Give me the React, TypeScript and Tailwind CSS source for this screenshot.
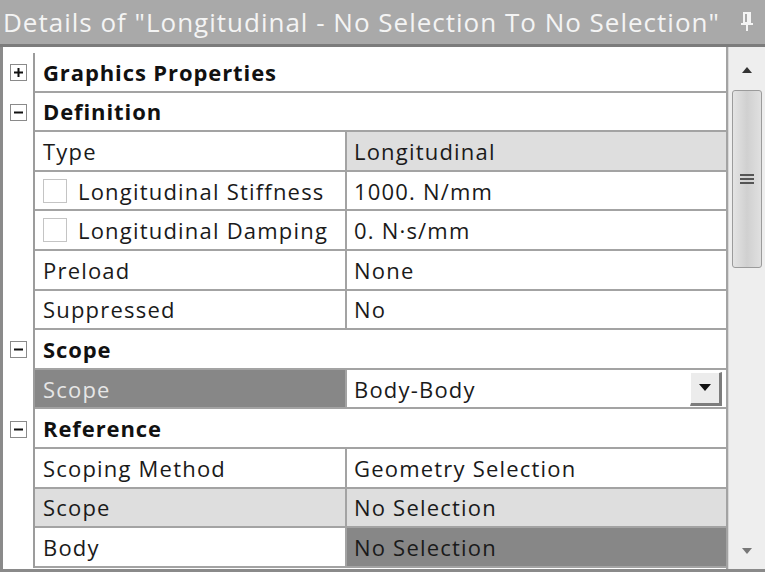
import React from 'react';

type Row =
  | { kind: 'group'; label: string; open: boolean }
  | {
      kind: 'prop';
      label: string;
      value: string;
      check?: boolean;
      labelTone?: 'light' | 'dark';
      valueTone?: 'light' | 'dark';
      dropdown?: boolean;
    };

const rows: Row[] = [
  { kind: 'group', label: 'Graphics Properties', open: false },
  { kind: 'group', label: 'Definition', open: true },
  { kind: 'prop', label: 'Type', value: 'Longitudinal', valueTone: 'light' },
  { kind: 'prop', label: 'Longitudinal Stiffness', value: '1000. N/mm', check: true },
  { kind: 'prop', label: 'Longitudinal Damping', value: '0. N·s/mm', check: true },
  { kind: 'prop', label: 'Preload', value: 'None' },
  { kind: 'prop', label: 'Suppressed', value: 'No' },
  { kind: 'group', label: 'Scope', open: true },
  { kind: 'prop', label: 'Scope', value: 'Body-Body', labelTone: 'dark', dropdown: true },
  { kind: 'group', label: 'Reference', open: true },
  { kind: 'prop', label: 'Scoping Method', value: 'Geometry Selection' },
  { kind: 'prop', label: 'Scope', value: 'No Selection', labelTone: 'light', valueTone: 'light' },
  { kind: 'prop', label: 'Body', value: 'No Selection', valueTone: 'dark' },
];

const toneBg = (tone?: 'light' | 'dark') =>
  tone === 'light' ? 'bg-[#dedede]' : tone === 'dark' ? 'bg-[#878787]' : 'bg-white';

function ExpandBox({ open }: { open: boolean }) {
  return (
    <div className="w-[17px] h-[17px] border border-[#8a8a8a] bg-white flex items-center justify-center">
      <svg width="11" height="11" viewBox="0 0 11 11">
        <rect x="1" y="4.5" width="9" height="2" fill="#111" />
        {!open && <rect x="4.5" y="1" width="2" height="9" fill="#111" />}
      </svg>
    </div>
  );
}

function PropRow({ row }: { row: Row }) {
  if (row.kind === 'group') {
    return (
      <div className="flex h-[39.6px]">
        <div className="w-[32px] shrink-0 flex items-center justify-center border-r-2 border-[#9c9c9c]">
          <ExpandBox open={row.open} />
        </div>
        <div className="flex-1 flex items-center pl-[8px] font-bold tracking-[0.9px] text-[#111] border-b-2 border-[#a3a3a3] bg-white">
          {row.label}
        </div>
      </div>
    );
  }
  return (
    <div className="flex h-[39.6px]">
      <div className="w-[32px] shrink-0 border-r-2 border-[#9c9c9c]" />
      <div
        className={`w-[312px] shrink-0 flex items-center pl-[8px] border-b-2 border-r-2 border-[#a3a3a3] ${toneBg(row.labelTone)} ${
          row.labelTone === 'dark' ? 'text-[#e6e6e6]' : 'text-[#1a1a1a]'
        }`}
      >
        {row.check && (
          <span className="w-[24px] h-[24px] border border-[#c4c4c4] bg-white mr-[11px] shrink-0" />
        )}
        {row.label}
      </div>
      <div
        className={`flex-1 flex items-center pl-[7px] border-b-2 border-[#a3a3a3] text-[#1a1a1a] ${toneBg(row.valueTone)}`}
      >
        <span className="flex-1">{row.value}</span>
        {row.dropdown && (
          <div className="w-[32px] h-[34px] mr-[4px] bg-[#ececec] border-r-[3px] border-b-[3px] border-[#7d7d7d] border-t border-l border-t-white border-l-white flex items-center justify-center">
            <svg width="14" height="8" viewBox="0 0 14 8">
              <polygon points="1,0 13,0 7,7" fill="#111" />
            </svg>
          </div>
        )}
      </div>
    </div>
  );
}

function Scrollbar() {
  return (
    <div className="w-[37px] shrink-0 bg-[#eeeeee] flex flex-col items-center border-l border-[#d8d8d8]">
      <div className="h-[43px] pt-[3px] flex items-center justify-center">
        <svg width="12" height="8" viewBox="0 0 12 8">
          <polygon points="6,1 11,7 1,7" fill="#333" />
        </svg>
      </div>
      <div className="w-[30px] h-[178px] rounded-[3px] border border-[#9b9b9b] bg-gradient-to-r from-[#e4e4e4] via-[#d0d0d0] to-[#e0e0e0] flex flex-col items-center justify-center gap-[2px]">
        <div className="w-[14px] h-[2px] bg-[#555]" />
        <div className="w-[14px] h-[2px] bg-[#555]" />
        <div className="w-[14px] h-[2px] bg-[#555]" />
      </div>
      <div className="flex-1" />
      <div className="h-[36px] flex items-center justify-center">
        <svg width="12" height="8" viewBox="0 0 12 8">
          <polygon points="1,1 11,1 6,7" fill="#777" />
        </svg>
      </div>
    </div>
  );
}

export default function App() {
  return (
    <div
      className="w-[765px] h-[572px] overflow-hidden bg-[#a9a9a9] flex flex-col text-[22px] tracking-[1.2px] leading-none"
      style={{ fontFamily: '"Open Sans", "Noto Sans", sans-serif' }}
    >
      <div className="h-[47px] shrink-0 flex items-center justify-between pl-[3px] pr-[12px] text-[#f4f4f4] text-[26px] tracking-[1px] border-b-[3px] border-[#7c7c7c]">
        <span>Details of "Longitudinal - No Selection To No Selection"</span>
        <svg width="12" height="20" viewBox="0 0 12 20">
          <rect x="3" y="1" width="6" height="10" fill="none" stroke="#f4f4f4" strokeWidth="2" />
          <rect x="6" y="2" width="2" height="9" fill="#f4f4f4" />
          <rect x="0" y="11" width="12" height="2" fill="#f4f4f4" />
          <rect x="5" y="13" width="2" height="6" fill="#f4f4f4" />
        </svg>
      </div>
      <div className="flex-1 flex border-l-[3px] border-b-[3px] border-[#8a8a8a] bg-white">
        <div className="flex-1 flex flex-col pt-[6px] border-r-2 border-[#a3a3a3]">
          {rows.map((r, i) => (
            <PropRow key={i} row={r} />
          ))}
        </div>
        <Scrollbar />
      </div>
    </div>
  );
}
